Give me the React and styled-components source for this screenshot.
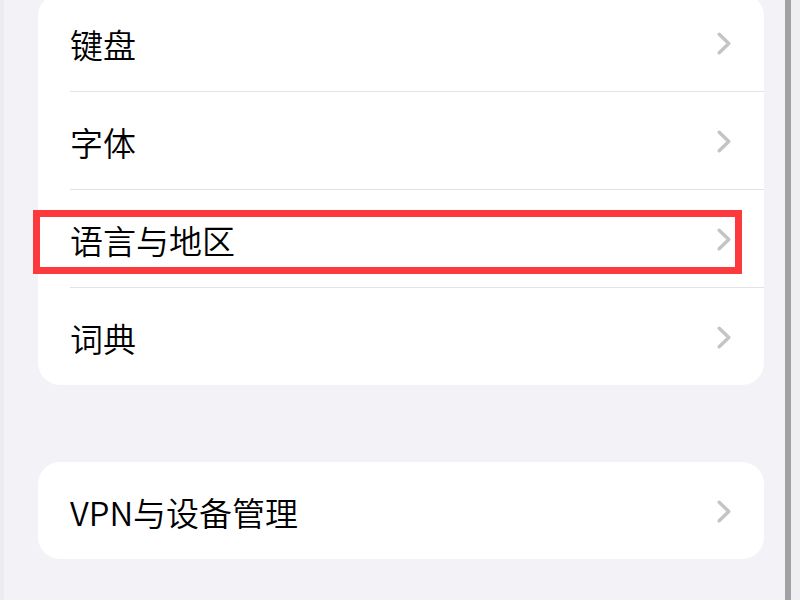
import React from "react";
import styled, { createGlobalStyle } from "styled-components";

const Global = createGlobalStyle`
  html, body { margin: 0; padding: 0; background: #f2f2f7; }
  body { width: 800px; height: 600px; overflow: hidden; font-family: "Noto Sans CJK SC", "Noto Sans", sans-serif; }
`;

const Screen = styled.div`
  display: grid;
  grid-template-columns: 4px 1fr 6px 9px;
  width: 800px;
  height: 600px;
  overflow: hidden;
`;

const EdgeStrip = styled.div`
  background: ${(p) => p.$color};
`;

const Content = styled.div`
  background: #f2f2f7;
  padding: 0 21px 0 34px;
  display: flex;
  flex-direction: column;
  gap: 77px;
`;

const Card = styled.div`
  background: #ffffff;
  border-radius: 22px;
  display: flex;
  flex-direction: column;
  margin-top: ${(p) => p.$offset || 0}px;
`;

const Row = styled.div`
  position: relative;
  height: 97px;
  display: flex;
  align-items: center;
  justify-content: space-between;
  padding: 2px 33px 0 32px;
  box-sizing: border-box;
`;

const Label = styled.span`
  font-family: "Noto Sans CJK SC", "Noto Sans", sans-serif;
  font-size: 33px;
  font-weight: 350;
  color: #000;
`;

const Separator = styled.div`
  height: 1px;
  margin-left: 32px;
  background: #e2e2e5;
`;

const Highlight = styled.div`
  position: absolute;
  left: -5px;
  top: 20px;
  width: 709px;
  height: 64px;
  box-sizing: border-box;
  border: 7px solid #fc3a3e;
  pointer-events: none;
`;

const Chevron = () => (
  <svg width="14" height="23" viewBox="0 0 14 23" style={{ marginTop: -1 }}>
    <polyline
      points="2.2,2.2 11.8,11.5 2.2,20.8"
      fill="none"
      stroke="#c4c4c7"
      strokeWidth="3.4"
      strokeLinecap="round"
      strokeLinejoin="round"
    />
  </svg>
);

const items = [
  { label: "键盘" },
  { label: "字体" },
  { label: "语言与地区", highlighted: true },
  { label: "词典" },
];

export default function App() {
  return (
    <>
      <Global />
      <Screen>
        <EdgeStrip $color="#ececee" />
        <Content>
          <Card $offset={-6}>
            {items.map((it, i) => (
              <React.Fragment key={it.label}>
                <Row>
                  <Label>{it.label}</Label>
                  <Chevron />
                  {it.highlighted && <Highlight />}
                </Row>
                {i < items.length - 1 && <Separator />}
              </React.Fragment>
            ))}
          </Card>
          <Card>
            <Row>
              <Label>VPN与设备管理</Label>
              <Chevron />
            </Row>
          </Card>
        </Content>
        <EdgeStrip $color="#a1a1a4" />
        <EdgeStrip $color="#efeff2" />
      </Screen>
    </>
  );
}
